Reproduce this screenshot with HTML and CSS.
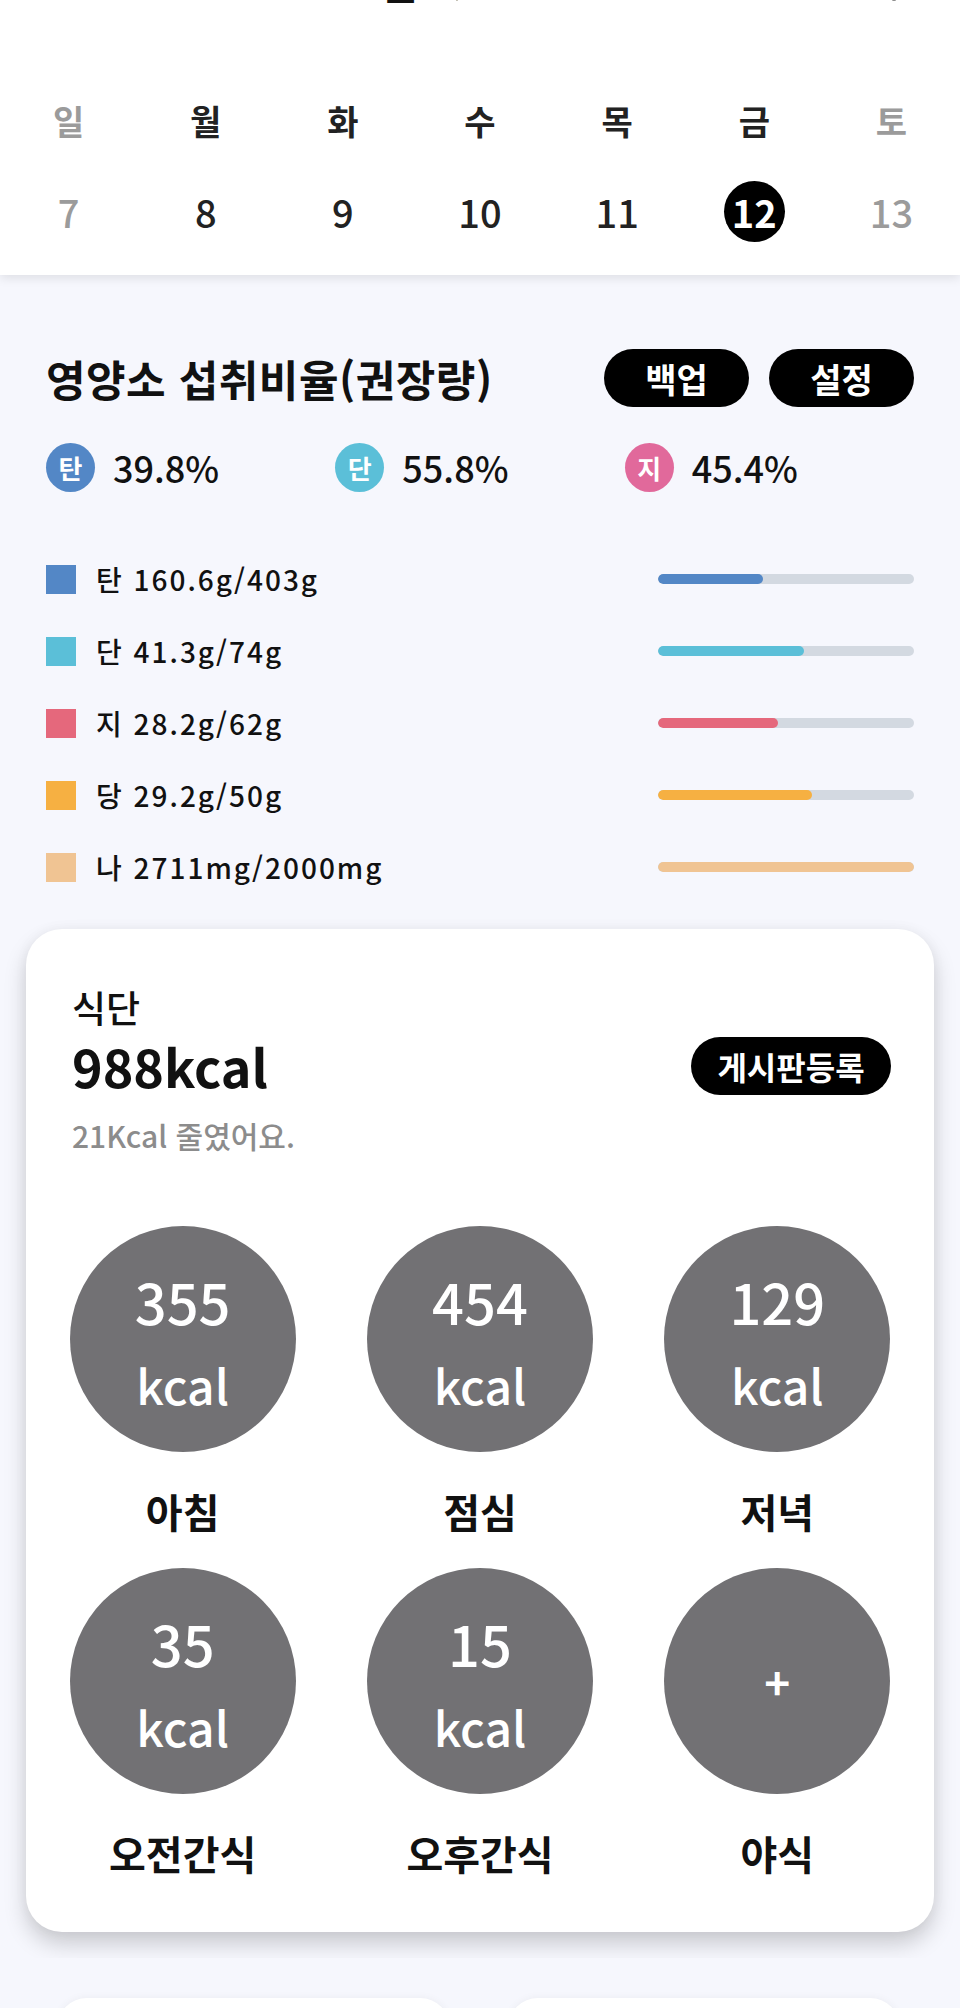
FILE: index.html
```html
<!DOCTYPE html>
<html lang="ko">
<head>
	<meta charset="utf-8" />
	<title>식단 기록</title>
	<link rel="stylesheet" href="styles.css">
</head>
<body>
	<div class="calendar">
		<div class="topbar">
			<span class="month">11월</span>
			<svg class="chev" width="20" height="12" viewBox="0 0 20 12"><path d="M3 2 L10 9 L17 2" fill="none" stroke="#9a9480" stroke-width="3" stroke-linecap="round"/></svg>
			<svg class="cal-icon" width="40" height="40" viewBox="0 0 40 40"><rect x="3" y="6" width="34" height="31" rx="4" fill="none" stroke="#222" stroke-width="4"/></svg>
			<svg class="more-icon" width="12" height="40" viewBox="0 0 12 40"><circle cx="6" cy="6" r="3.5" fill="#222"/><circle cx="6" cy="20" r="3.5" fill="#222"/><circle cx="6" cy="35" r="3.5" fill="#222"/></svg>
		</div>
		<div class="week labels">
			<span class="off">일</span><span>월</span><span>화</span><span>수</span><span>목</span><span>금</span><span class="off">토</span>
		</div>
		<div class="week dates">
			<span class="off">7</span><span>8</span><span>9</span><span>10</span><span>11</span><span><b class="today">12</b></span><span class="off">13</span>
		</div>
	</div>

	<div class="nutri">
		<div class="nutri-head">
			<h2>영양소 섭취비율(권장량)</h2>
			<div class="btns">
				<a href="#" class="pill">백업</a>
				<a href="#" class="pill">설정</a>
			</div>
		</div>

		<div class="ratio">
			<div class="ratio-item"><span class="badge carb">탄</span>39.8%</div>
			<div class="ratio-item"><span class="badge prot">단</span>55.8%</div>
			<div class="ratio-item"><span class="badge fat">지</span>45.4%</div>
		</div>

		<div class="legend">
			<div class="legend-row">
				<div class="legend-label"><span class="swatch carb"></span>탄 160.6g/403g</div>
				<div class="track"><div class="fill carb" style="width: 41%"></div></div>
			</div>
			<div class="legend-row">
				<div class="legend-label"><span class="swatch prot"></span>단 41.3g/74g</div>
				<div class="track"><div class="fill prot" style="width: 57%"></div></div>
			</div>
			<div class="legend-row">
				<div class="legend-label"><span class="swatch fat2"></span>지 28.2g/62g</div>
				<div class="track"><div class="fill fat2" style="width: 47%"></div></div>
			</div>
			<div class="legend-row">
				<div class="legend-label"><span class="swatch sugar"></span>당 29.2g/50g</div>
				<div class="track"><div class="fill sugar" style="width: 60%"></div></div>
			</div>
			<div class="legend-row">
				<div class="legend-label"><span class="swatch salt"></span>나 2711mg/2000mg</div>
				<div class="track"><div class="fill salt" style="width: 100%"></div></div>
			</div>
		</div>
	</div>

	<div class="meal-wrap">
		<div class="meal-card">
			<div class="meal-head">
				<div class="meal-title">식단</div>
				<div class="meal-total-row">
					<div class="meal-total">988kcal</div>
					<a href="#" class="pill board">게시판등록</a>
				</div>
				<div class="meal-note">21Kcal 줄였어요.</div>
			</div>

			<div class="meals">
				<div class="meal">
					<div class="plate"><span class="num">355</span><span class="unit">kcal</span></div>
					<div class="meal-name">아침</div>
				</div>
				<div class="meal">
					<div class="plate"><span class="num">454</span><span class="unit">kcal</span></div>
					<div class="meal-name">점심</div>
				</div>
				<div class="meal">
					<div class="plate"><span class="num">129</span><span class="unit">kcal</span></div>
					<div class="meal-name">저녁</div>
				</div>
				<div class="meal">
					<div class="plate"><span class="num">35</span><span class="unit">kcal</span></div>
					<div class="meal-name">오전간식</div>
				</div>
				<div class="meal">
					<div class="plate"><span class="num">15</span><span class="unit">kcal</span></div>
					<div class="meal-name">오후간식</div>
				</div>
				<div class="meal">
					<div class="plate"><span class="plus">+</span></div>
					<div class="meal-name">야식</div>
				</div>
			</div>
		</div>
	</div>

	<div class="more">
		<div class="mini-card"></div>
		<div class="mini-card"></div>
	</div>
</body>
</html>
```

FILE: styles.css
```css
body {
	margin: 0;
	background: #f6f7fd;
	font-family: "Noto Sans CJK KR", "Noto Sans", sans-serif;
	color: #111;
}

a {
	text-decoration: none;
}

/* calendar header */
.calendar {
	background: #fff;
	padding-bottom: 33px;
	box-shadow: 0 3px 10px rgba(0, 0, 0, 0.1);
	position: relative;
	z-index: 1;
}

.topbar {
	height: 44px;
	margin-top: -40px;
	display: flex;
	align-items: flex-end;
}

.month {
	margin-left: 333px;
	font-size: 40px;
	font-weight: 700;
	line-height: 44px;
}

.chev {
	margin-left: 30px;
	margin-bottom: 2px;
}

.cal-icon {
	margin-left: 269px;
	margin-bottom: 4px;
}

.more-icon {
	margin-left: 112px;
	margin-bottom: 2px;
}

.week {
	display: grid;
	grid-template-columns: repeat(7, 1fr);
	text-align: center;
}

.labels {
	margin-top: 95px;
	font-size: 34px;
	font-weight: 700;
	line-height: 44px;
	color: #222;
}

.dates {
	margin-top: 38px;
	font-size: 38px;
	font-weight: 500;
	line-height: 61px;
	height: 61px;
	color: #222;
}

.week .off {
	color: #9b9b9b;
}

.today {
	display: inline-block;
	width: 61px;
	height: 61px;
	border-radius: 50%;
	background: #000;
	color: #fff;
	font-weight: 700;
}

/* nutrient ratio */
.nutri {
	padding: 74px 46px 0;
}

.nutri-head {
	display: flex;
	justify-content: space-between;
	align-items: center;
	height: 58px;
}

.nutri-head h2 {
	margin: 0;
	font-size: 43px;
	font-weight: 700;
	line-height: 58px;
	letter-spacing: 0.5px;
}

.btns {
	display: flex;
	gap: 20px;
}

.pill {
	width: 145px;
	height: 58px;
	border-radius: 29px;
	background: #000;
	color: #fff;
	font-size: 34px;
	font-weight: 700;
	display: flex;
	align-items: center;
	justify-content: center;
}

.ratio {
	display: grid;
	grid-template-columns: repeat(3, 1fr);
	margin-top: 34px;
	height: 50px;
}

.ratio-item {
	display: flex;
	align-items: center;
	gap: 18px;
	font-size: 36px;
	font-weight: 500;
}

.badge {
	width: 49px;
	height: 49px;
	border-radius: 50%;
	color: #fff;
	font-size: 26px;
	font-weight: 700;
	display: flex;
	align-items: center;
	justify-content: center;
}

.carb { background: #5387c6; }
.prot { background: #5bbfd8; }
.fat { background: #e1699b; }
.fat2 { background: #e5687c; }
.sugar { background: #f6b042; }
.salt { background: #f0c493; }

.legend {
	margin-top: 66px;
	display: flex;
	flex-direction: column;
	gap: 28px;
}

.legend-row {
	display: flex;
	align-items: center;
	justify-content: space-between;
	height: 44px;
}

.legend-label {
	display: flex;
	align-items: center;
	gap: 20px;
	font-size: 28px;
	font-weight: 500;
	letter-spacing: 2px;
}

.swatch {
	width: 30px;
	height: 29px;
}

.track {
	width: 256px;
	height: 10px;
	border-radius: 5px;
	background: #d3d9e1;
	overflow: hidden;
}

.fill {
	height: 100%;
	border-radius: 5px;
}

/* meal card */
.meal-wrap {
	margin-top: 20px;
	padding: 20px 26px 26px;
	overflow: hidden;
}

.meal-card {
	background: #fff;
	border-radius: 36px;
	padding: 56px 0 54px;
	box-shadow: 0 12px 22px rgba(0, 0, 0, 0.18), 0 0 14px rgba(0, 0, 0, 0.04);
}

.meal-head {
	padding: 0 43px 0 46px;
}

.meal-title {
	font-size: 37px;
	font-weight: 500;
	line-height: 44px;
}

.meal-total-row {
	display: flex;
	justify-content: space-between;
	align-items: center;
	margin-top: 8px;
}

.meal-total {
	font-size: 52px;
	font-weight: 700;
	line-height: 58px;
}

.pill.board {
	width: 200px;
	font-size: 32px;
}

.meal-note {
	margin-top: 20px;
	font-size: 30px;
	font-weight: 500;
	line-height: 40px;
	color: #8c8c8c;
}

.meals {
	display: grid;
	grid-template-columns: repeat(3, 1fr);
	row-gap: 32px;
	padding: 0 8px;
	margin-top: 71px;
}

.meal {
	display: flex;
	flex-direction: column;
	align-items: center;
}

.plate {
	width: 226px;
	height: 226px;
	border-radius: 50%;
	background: #727174;
	color: #fff;
	display: flex;
	flex-direction: column;
	align-items: center;
	justify-content: center;
}

.plate .num {
	font-size: 56px;
	font-weight: 500;
	line-height: 90px;
}

.plate .unit {
	font-size: 48px;
	font-weight: 500;
	line-height: 76px;
}

.plate .plus {
	font-size: 44px;
	font-weight: 700;
	line-height: 50px;
}

.meal-name {
	margin-top: 34px;
	font-size: 40px;
	font-weight: 700;
	line-height: 50px;
}

/* cards below */
.more {
	display: flex;
	gap: 58px;
	padding: 0 60px 0 57px;
	margin-top: 40px;
}

.mini-card {
	flex: 1;
	height: 200px;
	background: #fff;
	border-radius: 30px;
	box-shadow: 0 0 8px rgba(0, 0, 0, 0.05);
}
```
